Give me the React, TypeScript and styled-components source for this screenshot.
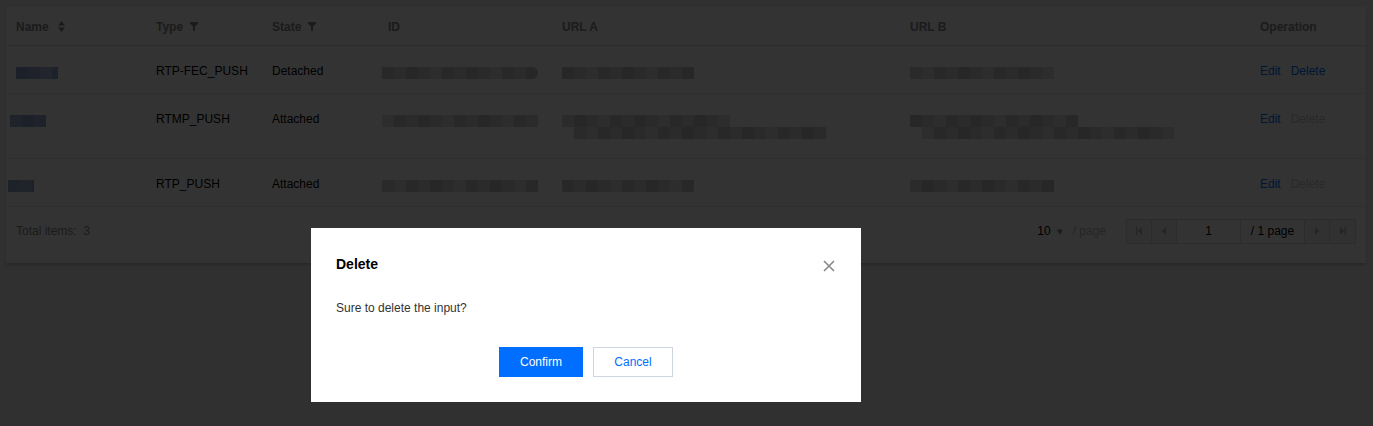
import styled, { createGlobalStyle } from "styled-components";

const GlobalStyle = createGlobalStyle`
  html, body {
    margin: 0;
    padding: 0;
    background: #f0f0f3;
    font-family: "Liberation Sans", Arial, sans-serif;
    font-size: 12px;
    color: #000;
  }
`;

type Row = {
  nameW: number;
  nameX: number;
  type: string;
  state: string;
  urlA: [number, number?];
  urlB: [number, number?];
  canDelete: boolean;
};

const rows: Row[] = [
  { nameW: 42, nameX: 0, type: "RTP-FEC_PUSH", state: "Detached", urlA: [132], urlB: [144], canDelete: true },
  { nameW: 36, nameX: -6, type: "RTMP_PUSH", state: "Attached", urlA: [168, 252], urlB: [168, 252], canDelete: false },
  { nameW: 26, nameX: -8, type: "RTP_PUSH", state: "Attached", urlA: [132], urlB: [144], canDelete: false },
];

// pixelated stand-in for the blurred values in the screenshot
const Mosaic = ({
  width,
  seed,
  tone = "gray",
  round,
}: {
  width: number;
  seed: number;
  tone?: "gray" | "blue";
  round?: boolean;
}) => {
  const count = Math.ceil(width / 12);
  return (
    <MosaicBar $round={round} style={{ width }}>
      {Array.from({ length: count }).map((_, i) => {
        const v = ((i * 37 + seed * 13) % 5) * 7;
        const bg =
          tone === "blue"
            ? `rgb(${140 + v}, ${158 + v}, ${200 + v / 2})`
            : `rgb(${194 + v}, ${194 + v}, ${196 + v})`;
        return <MosaicCell key={i} style={{ background: bg }} />;
      })}
    </MosaicBar>
  );
};

const UrlCell = ({ lines, seed }: { lines: [number, number?]; seed: number }) => (
  <MosaicStack $tall={!!lines[1]}>
    <Mosaic width={lines[0]} seed={seed} />
    {lines[1] ? (
      <IndentLine>
        <Mosaic width={lines[1]} seed={seed + 3} />
      </IndentLine>
    ) : null}
  </MosaicStack>
);

const SortIcon = () => (
  <svg width="7" height="11" viewBox="0 0 7 11">
    <path d="M3.5 0 L7 4.5 H0 Z M3.5 11 L7 6.5 H0 Z" fill="#888" />
  </svg>
);

const FilterIcon = () => (
  <svg width="8" height="9" viewBox="0 0 8 9">
    <path d="M0 0 H8 V1.5 L5 4.5 V9 H3 V4.5 L0 1.5 Z" fill="#888" />
  </svg>
);

const PagerIcon = ({ kind }: { kind: "first" | "prev" | "next" | "last" }) => (
  <svg width="8" height="8" viewBox="0 0 8 8">
    {kind === "first" && <path d="M1 0 H2.4 V8 H1 Z M7 0 V8 L2.8 4 Z" fill="#bbb" />}
    {kind === "prev" && <path d="M6 0 V8 L1.8 4 Z" fill="#bbb" />}
    {kind === "next" && <path d="M2 0 V8 L6.2 4 Z" fill="#bbb" />}
    {kind === "last" && <path d="M5.6 0 H7 V8 H5.6 Z M1 0 V8 L5.2 4 Z" fill="#bbb" />}
  </svg>
);

const CloseIcon = () => (
  <svg width="12" height="12" viewBox="0 0 12 12">
    <path d="M1 1 L11 11 M11 1 L1 11" stroke="#888" strokeWidth="1.6" />
  </svg>
);

export default function App() {
  return (
    <>
      <GlobalStyle />
      <Page>
        <Card>
          <Table>
            <colgroup>
              <col style={{ width: 140 }} />
              <col style={{ width: 116 }} />
              <col style={{ width: 116 }} />
              <col style={{ width: 174 }} />
              <col style={{ width: 348 }} />
              <col style={{ width: 350 }} />
              <col style={{ width: 116 }} />
            </colgroup>
            <thead>
              <tr>
                <Th>
                  <HeadLabel $gap={9}>
                    Name <SortIcon />
                  </HeadLabel>
                </Th>
                <Th>
                  <HeadLabel $gap={7}>
                    Type <FilterIcon />
                  </HeadLabel>
                </Th>
                <Th>
                  <HeadLabel $gap={7}>
                    State <FilterIcon />
                  </HeadLabel>
                </Th>
                <Th>ID</Th>
                <Th>URL A</Th>
                <Th>URL B</Th>
                <Th>Operation</Th>
              </tr>
            </thead>
            <tbody>
              {rows.map((row, i) => (
                <tr key={row.type}>
                  <Td>
                    <Shift $x={row.nameX}>
                      <Mosaic width={row.nameW} seed={i} tone="blue" />
                    </Shift>
                  </Td>
                  <Td>{row.type}</Td>
                  <Td>{row.state}</Td>
                  <Td>
                    <Shift $x={-6}>
                      <Mosaic width={156} seed={i + 2} round={i === 0} />
                    </Shift>
                  </Td>
                  <Td>
                    <UrlCell lines={row.urlA} seed={i + 5} />
                  </Td>
                  <Td>
                    <UrlCell lines={row.urlB} seed={i + 9} />
                  </Td>
                  <Td>
                    <Actions>
                      <ActionLink>Edit</ActionLink>
                      <ActionLink $disabled={!row.canDelete}>Delete</ActionLink>
                    </Actions>
                  </Td>
                </tr>
              ))}
            </tbody>
          </Table>
          <Footer>
            <Total>Total items:&nbsp; 3</Total>
            <PageSize>
              <SizeValue>10</SizeValue>
              <Caret>▾</Caret>
              <PerPage>/ page</PerPage>
            </PageSize>
            <Pager>
              <PagerButton>
                <PagerIcon kind="first" />
              </PagerButton>
              <PagerButton>
                <PagerIcon kind="prev" />
              </PagerButton>
              <PageInput>1</PageInput>
              <PageCount>/ 1 page</PageCount>
              <PagerButton>
                <PagerIcon kind="next" />
              </PagerButton>
              <PagerButton $last>
                <PagerIcon kind="last" />
              </PagerButton>
            </Pager>
          </Footer>
        </Card>
      </Page>

      <Overlay />
      <Dialog>
        <DialogHead>
          <DialogTitle>Delete</DialogTitle>
          <CloseButton>
            <CloseIcon />
          </CloseButton>
        </DialogHead>
        <DialogBody>Sure to delete the input?</DialogBody>
        <DialogFooter>
          <PrimaryButton>Confirm</PrimaryButton>
          <WeakButton>Cancel</WeakButton>
        </DialogFooter>
      </Dialog>
    </>
  );
}

const Page = styled.div`
  padding: 7px 7px 0 6px;
  height: 419px;
`;

const Card = styled.div`
  background: #fff;
  box-shadow: 0 2px 3px rgba(0, 0, 0, 0.2);
`;

const Table = styled.table`
  width: 100%;
  border-collapse: collapse;
  table-layout: fixed;
`;

const Th = styled.th`
  height: 38px;
  padding: 2px 10px 0;
  box-sizing: border-box;
  text-align: left;
  font-weight: bold;
  color: #888;
  border-bottom: 1px solid #ddd;
  vertical-align: middle;
`;

const HeadLabel = styled.span<{ $gap: number }>`
  display: inline-flex;
  align-items: center;
  gap: ${(p) => p.$gap}px;
`;

const Td = styled.td`
  padding: 15px 10px 12px;
  line-height: 20px;
  vertical-align: top;
  border-bottom: 1px solid #e7eaef;
  color: #000;
  white-space: nowrap;
`;

const Shift = styled.div<{ $x: number }>`
  margin-left: ${(p) => p.$x}px;
  padding-top: 6px;
`;

const MosaicStack = styled.div<{ $tall: boolean }>`
  display: flex;
  flex-direction: column;
  padding-top: 6px;
  height: ${(p) => (p.$tall ? "31px" : "14px")};
`;

const IndentLine = styled.div`
  margin-left: 12px;
`;

const MosaicBar = styled.div<{ $round?: boolean }>`
  display: flex;
  height: 12px;
  overflow: hidden;
  border-radius: ${(p) => (p.$round ? "0 6px 6px 0" : "0")};
`;

const MosaicCell = styled.span`
  flex: 0 0 12px;
  height: 12px;
`;

const Actions = styled.div`
  display: flex;
  gap: 10px;
`;

const ActionLink = styled.a<{ $disabled?: boolean }>`
  color: ${(p) => (p.$disabled ? "#ccc" : "#006eff")};
  text-decoration: none;
  cursor: pointer;
`;

const Footer = styled.div`
  display: flex;
  align-items: center;
  padding: 12px 10px 19px;
`;

const Total = styled.span`
  color: #888;
  flex: 1;
  line-height: 25px;
`;

const PageSize = styled.div`
  display: flex;
  align-items: center;
  margin-right: 20px;
`;

const SizeValue = styled.span`
  color: #000;
`;

const Caret = styled.span`
  color: #888;
  font-size: 11px;
  margin: 0 10px 0 6px;
`;

const PerPage = styled.span`
  color: #bbb;
`;

const Pager = styled.div`
  display: flex;
  height: 25px;
  border: 1px solid #ddd;
  box-sizing: border-box;
  & > * {
    box-sizing: border-box;
  }
`;

const PagerButton = styled.span<{ $last?: boolean }>`
  width: 25px;
  display: flex;
  align-items: center;
  justify-content: center;
  background: #f2f2f2;
  border-right: ${(p) => (p.$last ? "none" : "1px solid #ddd")};
`;

const PageInput = styled.span`
  width: 64px;
  line-height: 23px;
  text-align: center;
  color: #000;
  border-right: 1px solid #ddd;
`;

const PageCount = styled.span`
  width: 64px;
  line-height: 23px;
  text-align: center;
  color: #000;
  border-right: 1px solid #ddd;
`;

const Overlay = styled.div`
  position: fixed;
  inset: 0;
  background: rgba(0, 0, 0, 0.8);
`;

const Dialog = styled.div`
  position: absolute;
  left: 311px;
  top: 228px;
  width: 550px;
  box-sizing: border-box;
  background: #fff;
  padding: 26px 25px 25px;
`;

const DialogHead = styled.div`
  display: flex;
  align-items: center;
  justify-content: space-between;
`;

const DialogTitle = styled.h3`
  margin: 0;
  font-size: 14px;
  line-height: 20px;
  font-weight: bold;
  color: #000;
`;

const CloseButton = styled.span`
  display: flex;
  margin: 4px 1px 0 0;
`;

const DialogBody = styled.p`
  margin: 24px 0 0;
  line-height: 20px;
  color: #333;
`;

const DialogFooter = styled.div`
  display: flex;
  justify-content: center;
  gap: 10px;
  margin-top: 29px;
`;

const PrimaryButton = styled.button`
  width: 84px;
  height: 30px;
  border: none;
  background: #006eff;
  color: #fff;
  font-family: inherit;
  font-size: 12px;
  cursor: pointer;
`;

const WeakButton = styled.button`
  width: 80px;
  height: 30px;
  border: 1px solid #cfd5de;
  background: #fff;
  color: #006eff;
  font-family: inherit;
  font-size: 12px;
  cursor: pointer;
`;
